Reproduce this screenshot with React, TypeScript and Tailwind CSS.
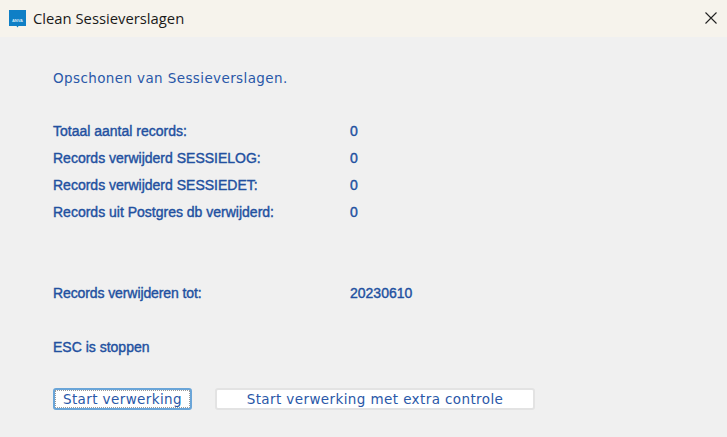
export default function App() {
  const rows = [
    ["Totaal aantal records:", "0"],
    ["Records verwijderd SESSIELOG:", "0"],
    ["Records verwijderd SESSIEDET:", "0"],
    ["Records uit Postgres db verwijderd:", "0"],
  ];
  const label = "h-[27px] flex items-center text-[14px] font-['Liberation_Sans',sans-serif] text-[#2250a0] [-webkit-text-stroke:0.4px_#2250a0]";
  const btn = "h-[22px] rounded-[3px] bg-white font-['DejaVu_Sans',sans-serif] text-[13.5px] tracking-[0.4px] text-[#2a58a8] flex items-center justify-center";
  return (
    <div className="w-[727px] h-[437px] bg-[#f0f0f0] flex flex-col overflow-hidden">
      <div className="h-[37px] bg-[#f6f3ec] flex items-center pl-[9px] pr-[10px]">
        <svg width="17" height="18" viewBox="0 0 17 18">
          <path d="M0 0H17V16H9.5L8.5 17.5L7.5 16H0Z" fill="#0f7fc6" />
          <text x="8.5" y="12" textAnchor="middle" fontSize="4" fontWeight="700" fill="#d5e9f7" fontFamily="Liberation Sans, sans-serif">ANVA</text>
        </svg>
        <span className="ml-[7px] text-[14.8px] font-['Open_Sans',sans-serif] text-[#1a1a1a]">Clean Sessieverslagen</span>
        <svg width="12" height="12" viewBox="0 0 12 12" className="ml-auto mt-[-1px]">
          <path d="M0.5 0.5L11.5 11.5M11.5 0.5L0.5 11.5" stroke="#222" strokeWidth="1.1" fill="none" />
        </svg>
      </div>
      <div className="flex flex-col pl-[53px]">
        <div className="mt-[32px] h-[18px] flex items-center text-[13.5px] tracking-[0.39px] font-['DejaVu_Sans',sans-serif] text-[#2a58a8]">Opschonen van Sessieverslagen.</div>
        <div className="mt-[31px] flex flex-col">
          {rows.map(([a, b]) => (
            <div key={a} className={label}>
              <span className="w-[297px]">{a}</span>
              <span>{b}</span>
            </div>
          ))}
        </div>
        <div className={label + " mt-[54px]"}>
          <span className="w-[297px] tracking-[-0.1px]">Records verwijderen tot:</span>
          <span>20230610</span>
        </div>
        <div className={label + " mt-[27px]"}>ESC is stoppen</div>
        <div className="mt-[27px] flex gap-[23px]">
          <div className={btn + " w-[139px] border-2 border-[#6aa5d8] outline-1 outline-dotted -outline-offset-3 outline-[#999999]"}>Start verwerking</div>
          <div className={btn + " w-[320px] border-2 border-[#e3e3e3]"}>Start verwerking met extra controle</div>
        </div>
      </div>
    </div>
  );
}
